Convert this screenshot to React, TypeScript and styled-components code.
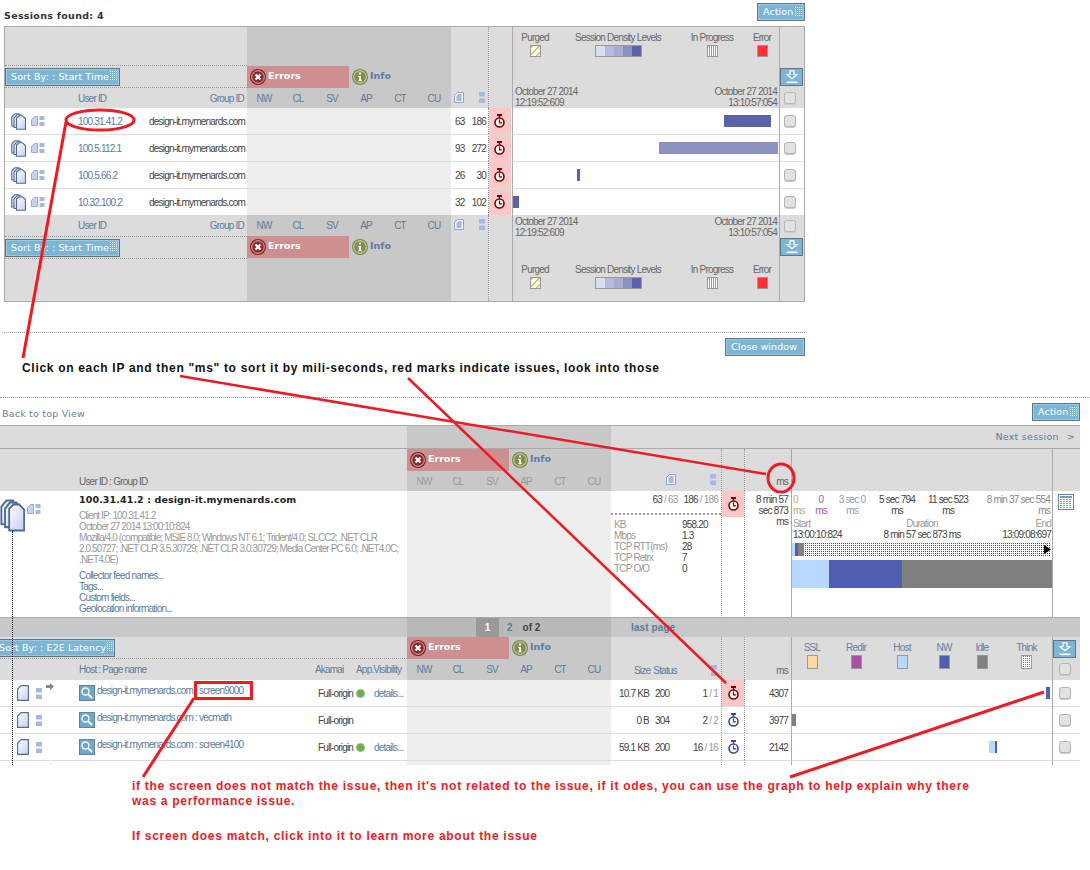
import React from "react";
import styled, { createGlobalStyle, css } from "styled-components";

const GlobalStyle = createGlobalStyle`
  html, body {
    margin: 0;
    padding: 0;
    background: #fff;
  }
  body {
    font: 10px/11px "Liberation Sans", Arial, sans-serif;
    letter-spacing: -0.8px;
    color: #444;
  }
  * {
    box-sizing: border-box;
  }
`;

const LINK = "#5b7c9e";
const LINE = "#aaa";
const HEAD = "#dcdcdc";
const ERR_HEAD = "#c8c8c8";
const ERR_ROW = "#eee";
const BLUE = "#525fb0";
const VERDANA = `"DejaVu Sans", Verdana, sans-serif`;

const Page = styled.div`
  position: relative;
  width: 1090px;
  height: 870px;
  overflow: hidden;
`;

const TopBar = styled.div`
  display: flex;
  justify-content: space-between;
  align-items: flex-start;
  width: 805px;
  height: 26px;
  padding-left: 4px;
`;

const Title = styled.div`
  margin-top: 10px;
  font: bold 9.5px/11px ${VERDANA};
  letter-spacing: 0.3px;
  color: #333;
`;

const BlueButton = styled.div<{ $w: number }>`
  display: flex;
  align-items: center;
  justify-content: space-between;
  width: ${(p) => p.$w}px;
  height: 18px;
  padding: 0 2px 0 5px;
  flex: none;
  background: #7db6d4;
  border: 1px solid #5f7785;
  box-shadow: inset 0 0 0 1px #9cc9e0;
  font: 9.5px/12px ${VERDANA};
  letter-spacing: 0.1px;
  color: #fff;
  white-space: nowrap;
`;

const ActionButton = styled(BlueButton)`
  margin-top: 3px;
`;

const Grip = styled.span`
  width: 8px;
  height: 9px;
  margin-bottom: 2px;
  flex: none;
  background: conic-gradient(#e4f3fb 25%, transparent 0) 0 0 / 2px 2px;
`;

const SessionPanel = styled.div`
  display: grid;
  grid-template-columns: 242px 204px 37px 24px 267px 25px;
  grid-template-rows: 81px 26px 27px 27px 27px 1fr;
  width: 801px;
  height: 276px;
  margin-left: 4px;
  border: 1px solid ${LINE};
  background: ${HEAD};
`;

const DetailPanel = styled.div`
  position: relative;
  display: grid;
  grid-template-columns: 407px 204px 110px 23px 47px 261px 28px;
  grid-auto-rows: min-content;
  width: 1080px;
  height: 340px;
  overflow: hidden;
  border-top: 1px solid ${LINE};
`;

const Stack = styled.div`
  display: flex;
  flex-direction: column;
`;

const HeadColumn = styled(Stack)`
  background: ${HEAD};
`;

const ErrorColumn = styled(Stack)`
  background: ${ERR_HEAD};
`;

const Gap = styled.div<{ $h: number }>`
  height: ${(p) => p.$h}px;
  border-bottom: 1px dotted #999;
`;

const PlainGap = styled.div<{ $h: number }>`
  height: ${(p) => p.$h}px;
`;

const SortBand = styled.div<{ $ml?: number; $line?: boolean }>`
  display: flex;
  align-items: center;
  height: 22px;
  margin-left: ${(p) => p.$ml || 0}px;
  ${(p) => p.$line && "border-bottom: 1px dotted #999;"}
`;

const LabelRow = styled.div<{ $h: number; $line?: boolean }>`
  display: flex;
  align-items: center;
  justify-content: space-between;
  height: ${(p) => p.$h}px;
  padding: 0 3px 0 73px;
  color: ${LINK};
  ${(p) => p.$line && "border-bottom: 1px dotted #999;"}
`;

const Band = styled.div`
  display: flex;
  align-items: stretch;
  height: 22px;
`;

const ErrorsTag = styled.div`
  display: flex;
  align-items: center;
  gap: 2px;
  width: 102px;
  padding: 0 0 2px 3px;
  background: #cd8f8f;
  font: bold 9.5px/12px ${VERDANA};
  letter-spacing: 0;
  color: #fff;

  svg {
    margin-top: 2px;
  }
`;

const InfoTag = styled(ErrorsTag)`
  width: auto;
  background: none;
  color: ${LINK};
`;

const CodeRow = styled.div<{ $h: number; $muted?: boolean }>`
  display: grid;
  grid-template-columns: repeat(6, 34px);
  align-items: center;
  height: ${(p) => p.$h}px;
  text-align: center;
  color: ${(p) => (p.$muted ? "#999" : LINK)};
`;

const rowCell = css<{ $first?: boolean }>`
  height: ${(p) => (p.$first ? 26 : 27)}px;
  ${(p) => !p.$first && "border-top: 1px solid #ddd;"}
`;

const NameCell = styled.div<{ $first?: boolean }>`
  ${rowCell}
  display: grid;
  grid-template-columns: 20px 47px 71px 1fr;
  align-items: center;
  padding-left: 6px;
  background: #fff;
`;

const Ip = styled.span`
  color: ${LINK};
`;

const Group = styled.span`
  color: #444;
  white-space: nowrap;
`;

const ErrorCell = styled.div<{ $first?: boolean }>`
  ${rowCell}
  background: ${ERR_ROW};
`;

const CountCell = styled.div<{ $first?: boolean }>`
  ${rowCell}
  display: flex;
  align-items: center;
  justify-content: space-between;
  padding: 0 2px 0 4px;
  background: #fff;
`;

const TimerCell = styled.div<{ $first?: boolean; $alert?: boolean }>`
  ${rowCell}
  display: flex;
  align-items: center;
  justify-content: center;
  padding-right: 3px;
  border-left: 1px dotted #999;
  background: ${(p) => (p.$alert ? "linear-gradient(90deg, #ffc8c8 22px, #fff 0)" : "#fff")};
`;

const GraphCell = styled.div<{ $first?: boolean }>`
  ${rowCell}
  display: flex;
  align-items: center;
  border-left: 1px solid ${LINE};
  background: #fff;
`;

const CheckCell = styled.div<{ $first?: boolean; $pad?: number }>`
  ${rowCell}
  display: flex;
  align-items: center;
  padding-left: ${(p) => p.$pad || 4}px;
  border-left: 1px solid ${LINE};
  background: #fff;
`;

const Bar = styled.div<{ $left?: number; $w: number; $color: string }>`
  width: ${(p) => p.$w}px;
  height: 12px;
  margin-left: ${(p) => p.$left || 0}px;
  background: ${(p) => p.$color};
`;

const Checkbox = styled.span`
  display: block;
  width: 12px;
  height: 12px;
  background: #e2e2e2;
  border: 1px solid #b4b4b4;
  border-radius: 3px;
  box-shadow: 0 1px 0 #ccc;
`;

const CountHead = styled.div<{ $bottom?: number; $top?: number; $left?: number; $right?: number }>`
  display: flex;
  align-items: ${(p) => (p.$top ? "flex-start" : "flex-end")};
  justify-content: space-between;
  padding: ${(p) => p.$top || 0}px ${(p) => p.$right || 3}px ${(p) => p.$bottom || 0}px ${(p) => p.$left || 3}px;
  background: ${HEAD};
`;

const GraphHead = styled.div<{ $footer?: boolean }>`
  display: flex;
  flex-direction: column;
  ${(p) => p.$footer && "padding: 1px 0 12px;"}
  border-left: 1px solid ${LINE};
  background: ${HEAD};
`;

const Legend = styled.div<{ $end?: boolean }>`
  display: grid;
  grid-template-columns: 44px 122px 66px 34px;
  padding-top: 5px;
  ${(p) => p.$end && "margin-top: auto;"}
  text-align: center;
  color: #666;
`;

const LegendItem = styled.div`
  display: flex;
  flex-direction: column;
  align-items: center;
  gap: 2px;
  white-space: nowrap;
`;

const swatchFill = {
  purged: "repeating-linear-gradient(-45deg, #fff 0 2px, #f5b642 2px 3px, #fff 3px 5px)",
  progress: "repeating-linear-gradient(90deg, #fff 0 1px, #999 1px 2px)",
  error: "#ff3030",
  ssl: "#ffd9a0",
  redir: "#a850a0",
  host: "#b8d8ff",
  nw: BLUE,
  idle: "#808080",
  think: "conic-gradient(#777 25%, #fff 0) 0 0 / 2px 2px",
};

const Swatch = styled.span<{ $kind: keyof typeof swatchFill; $h?: number }>`
  display: block;
  width: 11px;
  height: ${(p) => p.$h || 12}px;
  background: ${(p) => swatchFill[p.$kind]};
  border: 1px solid #999;
`;

const Density = styled.span`
  display: grid;
  grid-template-columns: repeat(5, 1fr);
  width: 47px;
  height: 12px;
  border: 1px solid #999;
`;

const DensityStep = styled.span<{ $color: string }>`
  background: ${(p) => p.$color};
`;

const Dates = styled.div<{ $end?: boolean }>`
  display: flex;
  justify-content: space-between;
  padding: 0 2px;
  ${(p) => p.$end && "margin-top: auto;"}
  color: #666;
`;

const DateRight = styled.div`
  text-align: right;
`;

const CheckHead = styled.div<{ $top?: number }>`
  display: flex;
  flex-direction: column;
  padding-top: ${(p) => p.$top || 0}px;
  border-left: 1px solid ${LINE};
  background: ${HEAD};
`;

const DownButton = styled.div<{ $mt?: number }>`
  display: flex;
  align-items: center;
  justify-content: center;
  width: 23px;
  height: 18px;
  margin-top: ${(p) => p.$mt || 0}px;
  background: #7db6d4;
  border: 1px solid #5f7785;
`;

const CheckSlot = styled.div<{ $mt?: number; $pad?: number }>`
  margin-top: ${(p) => p.$mt || 0}px;
  padding-left: ${(p) => p.$pad || 4}px;
`;

const Divider = styled.div<{ $w: string; $mt: number; $ml?: number }>`
  width: ${(p) => p.$w};
  margin: ${(p) => p.$mt}px 0 0 ${(p) => p.$ml || 0}px;
  border-top: 1px dotted #999;
`;

const CloseRow = styled.div`
  display: flex;
  justify-content: flex-end;
  width: 805px;
  margin-top: 5px;
`;

const Instruction = styled.div`
  margin: 5px 0 0 22px;
  font: bold 12px/14px "Liberation Sans", Arial, sans-serif;
  letter-spacing: 0.69px;
  color: #111;
`;

const BackRow = styled.div`
  display: flex;
  justify-content: space-between;
  align-items: flex-start;
  width: 1080px;
  height: 27px;
  padding-top: 5px;
`;

const BackLink = styled.a`
  margin: 5px 0 0 2px;
  font: 9.5px/12px ${VERDANA};
  letter-spacing: 0.2px;
  color: #6a7f9e;
`;

const TopBand = styled.div<{ $dark?: boolean; $span?: number }>`
  display: flex;
  align-items: center;
  justify-content: flex-end;
  gap: 8px;
  height: 23px;
  padding-right: 5px;
  ${(p) => p.$span && `grid-column: span ${p.$span};`}
  background: ${(p) => (p.$dark ? ERR_HEAD : HEAD)};
  border-bottom: 1px solid ${LINE};
  font: 9.5px/12px ${VERDANA};
  letter-spacing: 0.25px;
  color: ${LINK};
`;

const DetailLabel = styled.div`
  display: flex;
  align-items: flex-end;
  height: 42px;
  padding: 0 0 4px 79px;
  background: ${HEAD};
  color: #666;
`;

const DottedHead = styled.div<{ $right?: boolean }>`
  display: flex;
  align-items: flex-end;
  justify-content: ${(p) => (p.$right ? "flex-end" : "flex-start")};
  padding: 0 3px 4px 0;
  border-left: 1px dotted #999;
  background: ${HEAD};
  color: #666;
`;

const SizeHead = styled.div`
  display: flex;
  align-items: flex-end;
  justify-content: space-between;
  padding: 0 4px 4px 23px;
  background: ${HEAD};
`;

const SolidHead = styled.div`
  border-left: 1px solid ${LINE};
  background: ${HEAD};
`;

const SessionInfo = styled.div`
  display: grid;
  grid-template-columns: 79px 1fr;
  height: 127px;
  border-bottom: 1px solid ${LINE};
  background: #fff;
`;

const SessionIcons = styled.div`
  display: flex;
  align-items: flex-start;
  gap: 2px;
  padding-top: 8px;
`;

const SmallPairSlot = styled.div`
  margin-top: 5px;
`;

const SessionText = styled.div`
  padding-top: 3px;
  white-space: nowrap;
`;

const SessionName = styled.div`
  margin-bottom: 4px;
  font: bold 9.5px/12px ${VERDANA};
  letter-spacing: 0.1px;
  color: #222;
`;

const AgentText = styled.div`
  letter-spacing: -0.9px;
  color: #999;
`;

const DetailLinks = styled.div`
  margin-top: 5px;
  color: ${LINK};
`;

const PlainColumn = styled.div<{ $bg?: string }>`
  height: 127px;
  border-bottom: 1px solid ${LINE};
  background: ${(p) => p.$bg || "#fff"};
`;

const SizeColumn = styled(PlainColumn)`
  padding-top: 3px;
`;

const Totals = styled.div`
  display: flex;
  justify-content: flex-end;
  gap: 6px;
  height: 21px;
  padding-right: 3px;
  border-bottom: 2px dotted #999;
  color: #444;
`;

const Faint = styled.span`
  color: #999;
`;

const Metrics = styled.div`
  display: grid;
  grid-template-columns: 68px 1fr;
  padding: 4px 0 0 3px;
`;

const MetricName = styled.span`
  color: #999;
`;

const DottedColumn = styled(PlainColumn)`
  border-left: 1px dotted #999;
`;

const PinkBlock = styled.div`
  display: flex;
  align-items: center;
  justify-content: center;
  height: 26px;
  background: #ffc8c8;
`;

const DurationText = styled(DottedColumn)`
  padding: 3px 3px 0 0;
  text-align: right;
`;

const SolidColumn = styled(PlainColumn)`
  border-left: 1px solid ${LINE};
`;

const GraphDetail = styled(SolidColumn)`
  padding-top: 3px;
`;

const PhaseRow = styled.div`
  display: grid;
  grid-template-columns: 19px 18px 44px 46px 56px 74px;
  padding-left: 1px;
  height: 24px;
  text-align: center;
`;

const Phase = styled.div<{ $color: string; $align?: string }>`
  color: ${(p) => p.$color};
  text-align: ${(p) => p.$align || "center"};
`;

const SpanLabels = styled.div`
  display: grid;
  grid-template-columns: 1fr auto 1fr;
  padding: 0 1px;
  height: 25px;
`;

const SpanColumn = styled.div<{ $align?: string }>`
  color: #444;
  text-align: ${(p) => p.$align || "left"};
`;

const SpanTitle = styled.div`
  color: #999;
`;

const Track = styled.div`
  display: flex;
  align-items: center;
  height: 13px;
  padding-right: 1px;
`;

const TrackBar = styled.span<{ $w: number; $color: string }>`
  width: ${(p) => p.$w}px;
  height: 13px;
  flex: none;
  background: ${(p) => p.$color};
`;

const TrackDots = styled.div`
  display: flex;
  justify-content: flex-end;
  align-items: center;
  flex: 1;
  height: 13px;
  background: conic-gradient(#555 25%, transparent 0) 0 0 / 2px 2px;
`;

const Waterfall = styled.div`
  display: flex;
  height: 28px;
  margin-top: 4px;
`;

const WaterfallPart = styled.span<{ $w: number; $color: string }>`
  width: ${(p) => p.$w}px;
  background: ${(p) => p.$color};
`;

const CalendarSlot = styled(SolidColumn)`
  padding: 3px 0 0 5px;
`;

const Pager = styled.div<{ $bg: string; $pad?: number; $span?: number }>`
  display: flex;
  align-items: center;
  height: 19px;
  padding-left: ${(p) => p.$pad || 0}px;
  ${(p) => p.$span && `grid-column: span ${p.$span};`}
  background: ${(p) => p.$bg};
  font: bold 10px/12px "Liberation Sans", Arial, sans-serif;
  letter-spacing: 0;
  color: #444;
`;

const PageBox = styled.span`
  display: flex;
  align-items: center;
  justify-content: center;
  width: 23px;
  height: 19px;
  background: #999;
  color: #fff;
`;

const PageLink = styled.span`
  margin-left: 8px;
  color: ${LINK};
`;

const PageOf = styled.span`
  margin-left: 10px;
`;

const LastPage = styled.span`
  letter-spacing: 0.1px;
  color: ${LINK};
`;

const ListHeadLabels = styled.div`
  display: grid;
  grid-template-columns: 79px 236px 41px 1fr;
  align-items: center;
  height: 21px;
  color: ${LINK};
`;

const ListSize = styled.div`
  display: flex;
  gap: 3px;
  color: ${LINK};
`;

const ListLegend = styled.div`
  display: grid;
  grid-template-columns: 40px 48px 44px 40px 36px 53px;
  height: 43px;
  padding-top: 5px;
  text-align: center;
  color: #667f9f;
`;

const ListName = styled.div<{ $first?: boolean }>`
  ${rowCell}
  display: grid;
  grid-template-columns: 19px 10px 33px 18px 221px 38px 18px 33px;
  align-items: center;
  padding-left: 17px;
  background: #fff;
`;

const ArrowSlot = styled.div`
  align-self: flex-start;
  margin-top: 3px;
`;

const PageName = styled.span`
  align-self: flex-start;
  margin-top: 5px;
  color: ${LINK};
  white-space: pre;
`;

const Origin = styled.span`
  color: #444;
  white-space: nowrap;
`;

const Dot = styled.span`
  display: block;
  width: 9px;
  height: 9px;
  border: 1px solid #8fb886;
  border-radius: 50%;
  background: #6cb04e;
`;

const Magnifier = styled.span`
  display: flex;
  align-items: center;
  justify-content: center;
  width: 16px;
  height: 16px;
  background: #6fa8cc;
  border: 1px solid #6b7f8c;
`;

const ListCount = styled.div<{ $first?: boolean }>`
  ${rowCell}
  display: grid;
  grid-template-columns: 38px 6px 20px 1fr;
  align-items: center;
  padding-right: 3px;
  background: #fff;
  white-space: nowrap;
`;

const SizeValue = styled.span`
  grid-column: 1;
  text-align: right;
`;

const StatusValue = styled.span`
  grid-column: 3;
`;

const PagesValue = styled.span`
  grid-column: 4;
  text-align: right;
`;

const ListTimer = styled.div<{ $first?: boolean; $alert?: boolean }>`
  ${rowCell}
  display: flex;
  align-items: center;
  justify-content: center;
  border-left: 1px dotted #999;
  background: ${(p) => (p.$alert ? "#ffc8c8" : "#fff")};
`;

const ListMs = styled.div<{ $first?: boolean }>`
  ${rowCell}
  display: flex;
  align-items: center;
  justify-content: flex-end;
  padding-right: 3px;
  border-left: 1px dotted #999;
  background: #fff;
`;

const TreeLine = styled.div`
  position: absolute;
  left: 12px;
  top: 105px;
  bottom: 0;
  border-left: 1px dotted #000;
`;

const Notes = styled.div`
  padding: 14px 0 0 132px;
  font: bold 12px/15px "Liberation Sans", Arial, sans-serif;
  letter-spacing: 0.71px;
  color: #ed1c24;
`;

const NoteGap = styled.div`
  height: 20px;
`;

const Annotations = styled.svg`
  position: absolute;
  top: 0;
  left: 0;
  pointer-events: none;
`;

/* drawn icons */

const StackIcon = ({ w = 15, h = 17 }: { w?: number; h?: number }) => (
  <svg width={w} height={h} viewBox="0 0 15 17" preserveAspectRatio="none" style={{ display: "block" }}>
    <defs>
      <linearGradient id="page" x1="0" y1="0" x2="1" y2="1">
        <stop offset="0" stopColor="#fff" />
        <stop offset="1" stopColor="#c4cff0" />
      </linearGradient>
    </defs>
    <g stroke="#4f6a9c" strokeWidth="1.100" strokeLinejoin="round" fill="url(#page)">
      <path d="M.8 4 3.800.8H8V13H.8Z" />
      <path d="M3 5 6 1.800h4V14.500H3Z" />
      <path d="M5.500 5 8 2.800h3.500l3 2.700v10.700h-9Z" />
    </g>
  </svg>
);

const SmallPair = () => (
  <svg width="14" height="10" viewBox="0 0 14 10" style={{ display: "block" }}>
    <path d="M.5 3.500 3.500.5h3v9h-6Z" fill="#c7d2ee" stroke="#98a9d6" />
    <rect x="8.500" y="0" width="5" height="4" fill="#a8b8e0" />
    <rect x="8.500" y="6" width="5" height="4" fill="#a8b8e0" />
  </svg>
);

const PageIcon = () => (
  <svg width="10" height="11" viewBox="0 0 10 11" style={{ display: "block" }}>
    <path d="M.5 3.500 3.500.5h6v10h-9Z" fill="#f4f6fd" stroke="#8fa4d0" />
    <path d="M2.500 4 4.500 2h3v7h-5Z" fill="#a8b8e0" />
  </svg>
);

const ListDoc = () => (
  <svg width="12" height="16" viewBox="0 0 12 16" style={{ display: "block" }}>
    <path d="M.6 4 4 .6h7.400v14.800H.6Z" fill="url(#page)" stroke="#4f6a9c" strokeWidth="1.100" strokeLinejoin="round" />
  </svg>
);

const TwoSquares = () => (
  <svg width="6" height="11" viewBox="0 0 6 11" style={{ display: "block" }}>
    <rect width="6" height="4.500" fill="#a8b8e0" />
    <rect y="6.500" width="6" height="4.500" fill="#a8b8e0" />
  </svg>
);

const Stopwatch = ({ color = "#800000" }: { color?: string }) => (
  <svg width="11" height="14" viewBox="0 0 11 14" style={{ display: "block" }}>
    <path d="M3 1h5" stroke={color} strokeWidth="2" />
    <path d="M5.500 2v2" stroke={color} strokeWidth="1.400" />
    <circle cx="5.500" cy="8.500" r="4.500" fill="#fff" stroke={color} strokeWidth="1.600" />
    <path d="M5.500 5.500v3.300h2.600" fill="none" stroke={color} strokeWidth="1.200" />
  </svg>
);

const ErrorIcon = () => (
  <svg width="16" height="16" viewBox="0 0 16 16" style={{ display: "block" }}>
    <circle cx="8" cy="8" r="8" fill="#7f2020" />
    <circle cx="8" cy="8" r="6.300" fill="#8d2b2b" stroke="#f0dada" strokeWidth="0.800" />
    <path d="M5.500 5.500l5 5M10.500 5.500l-5 5" stroke="#fff" strokeWidth="2.200" />
  </svg>
);

const InfoIcon = () => (
  <svg width="16" height="16" viewBox="0 0 16 16" style={{ display: "block" }}>
    <circle cx="8" cy="8" r="8" fill="#79874a" />
    <circle cx="8" cy="8" r="6.300" fill="#808e50" stroke="#e6ecc8" strokeWidth="0.800" />
    <rect x="7" y="3.500" width="2" height="2" fill="#fff" />
    <path d="M6.200 7h2.800v4.200h1v1H6.200v-1h1V8h-1Z" fill="#fff" />
  </svg>
);

const DownArrow = () => (
  <svg width="14" height="14" viewBox="0 0 14 14" style={{ display: "block" }}>
    <path d="M5 .8h4v3.700h3L7 8.800 2 4.500h3Z" fill="none" stroke="#fff" strokeWidth="1.200" />
    <path d="M1.500 12.300h11" stroke="#fff" strokeWidth="1.600" />
  </svg>
);

const Lens = () => (
  <svg width="12" height="12" viewBox="0 0 12 12" style={{ display: "block" }}>
    <circle cx="4.500" cy="4.500" r="3.500" fill="none" stroke="#fff" strokeWidth="1.300" />
    <path d="M7 7l4 4" stroke="#fff" strokeWidth="1.800" />
  </svg>
);

const RightArrow = () => (
  <svg width="8" height="7" viewBox="0 0 8 7" style={{ display: "block" }}>
    <path d="M0 2h4V0l4 3.500L4 7V5H0Z" fill="#888" />
  </svg>
);

const Calendar = () => (
  <svg width="16" height="16" viewBox="0 0 16 16" style={{ display: "block" }}>
    <rect x=".5" y=".5" width="15" height="15" fill="#fff" stroke="#5a86b8" />
    <rect x="2" y="2" width="12" height="2" fill="#6f9cc8" />
    <path d="M2 5.500h12M2 7.500h12M2 9.500h12M2 11.500h12M2 13.500h12" stroke="#6f9cc8" strokeDasharray="2 1" />
  </svg>
);

const TrackArrow = () => (
  <svg width="7" height="9" viewBox="0 0 7 9" style={{ display: "block" }}>
    <path d="M0 0l7 4.500L0 9Z" fill="#000" />
  </svg>
);

/* repeated parts */

const SortButton = ({ label, w = 115 }: { label: string; w?: number }) => (
  <BlueButton $w={w}>
    {label}
    <Grip />
  </BlueButton>
);

const ErrorBand = () => (
  <Band>
    <ErrorsTag>
      <ErrorIcon />
      Errors
    </ErrorsTag>
    <InfoTag>
      <InfoIcon />
      Info
    </InfoTag>
  </Band>
);

const Codes = ({ h, muted }: { h: number; muted?: boolean }) => (
  <CodeRow $h={h} $muted={muted}>
    {["NW", "CL", "SV", "AP", "CT", "CU"].map((c) => (
      <span key={c}>{c}</span>
    ))}
  </CodeRow>
);

const LegendBar = ({ end }: { end?: boolean }) => (
  <Legend $end={end}>
    <LegendItem>
      Purged
      <Swatch $kind="purged" />
    </LegendItem>
    <LegendItem>
      Session Density Levels
      <Density>
        {["#dcdff0", "#b8bcdc", "#a8acd4", "#8a90c0", "#5a62ab"].map((c) => (
          <DensityStep key={c} $color={c} />
        ))}
      </Density>
    </LegendItem>
    <LegendItem>
      In Progress
      <Swatch $kind="progress" />
    </LegendItem>
    <LegendItem>
      Error
      <Swatch $kind="error" />
    </LegendItem>
  </Legend>
);

const DateRange = ({ end }: { end?: boolean }) => (
  <Dates $end={end}>
    <div>
      October 27 2014
      <br />
      12:19:52:609
    </div>
    <DateRight>
      October 27 2014
      <br />
      13:10:57:054
    </DateRight>
  </Dates>
);

const sessions = [
  { ip: "100.31.41.2", pages: 63, objects: 186, left: 211, w: 47, color: "#5a62ab" },
  { ip: "100.5.112.1", pages: 93, objects: 272, left: 146, w: 119, color: "#8a90c0" },
  { ip: "100.5.66.2", pages: 26, objects: 30, left: 64, w: 3, color: "#5a62ab" },
  { ip: "10.32.100.2", pages: 32, objects: 102, left: 0, w: 6, color: "#5a62ab" },
];

const pages = [
  { name: "design-it.mymenards.com : screen9000", akamai: true, size: "10.7 KB", status: 200, count: 1, ms: 4307, alert: true },
  { name: "design-it.mymenards.com : vecmath", akamai: false, size: "0 B", status: 304, count: 2, ms: 3977 },
  { name: "design-it.mymenards.com : screen4100", akamai: true, size: "59.1 KB", status: 200, count: 16, ms: 2142 },
];

const metrics = [
  ["KB", "958.20"],
  ["Mbps", "1.3"],
  ["TCP RTT(ms)", "28"],
  ["TCP Retrx", "7"],
  ["TCP O/O", "0"],
];

const links = ["Collector feed names...", "Tags...", "Custom fields...", "Geolocation information..."];

const App = () => (
  <Page>
    <GlobalStyle />

    <TopBar>
      <Title>Sessions found: 4</Title>
      <ActionButton $w={48}>
        Action
        <Grip />
      </ActionButton>
    </TopBar>

    <SessionPanel>
      <HeadColumn>
        <Gap $h={39} />
        <SortBand $line>
          <SortButton label="Sort By: : Start Time" />
        </SortBand>
        <LabelRow $h={20}>
          <span>User ID</span>
          <span>Group ID</span>
        </LabelRow>
      </HeadColumn>
      <ErrorColumn>
        <PlainGap $h={39} />
        <ErrorBand />
        <Codes h={20} />
      </ErrorColumn>
      <CountHead $bottom={5}>
        <PageIcon />
        <TwoSquares />
      </CountHead>
      <DottedHead />
      <GraphHead>
        <LegendBar />
        <DateRange end />
      </GraphHead>
      <CheckHead $top={41}>
        <DownButton>
          <DownArrow />
        </DownButton>
        <CheckSlot $mt={6}>
          <Checkbox />
        </CheckSlot>
      </CheckHead>

      {sessions.map((s, i) => (
        <React.Fragment key={s.ip}>
          <NameCell $first={i === 0}>
            <StackIcon />
            <SmallPair />
            <Ip>{s.ip}</Ip>
            <Group>design-it.mymenards.com</Group>
          </NameCell>
          <ErrorCell $first={i === 0} />
          <CountCell $first={i === 0}>
            <span>{s.pages}</span>
            <span>{s.objects}</span>
          </CountCell>
          <TimerCell $first={i === 0} $alert>
            <Stopwatch />
          </TimerCell>
          <GraphCell $first={i === 0}>
            <Bar $left={s.left} $w={s.w} $color={s.color} />
          </GraphCell>
          <CheckCell $first={i === 0}>
            <Checkbox />
          </CheckCell>
        </React.Fragment>
      ))}

      <HeadColumn>
        <LabelRow $h={22} $line>
          <span>User ID</span>
          <span>Group ID</span>
        </LabelRow>
        <SortBand $line>
          <SortButton label="Sort By: : Start Time" />
        </SortBand>
      </HeadColumn>
      <ErrorColumn>
        <Codes h={21} />
        <ErrorBand />
      </ErrorColumn>
      <CountHead $top={4}>
        <PageIcon />
        <TwoSquares />
      </CountHead>
      <DottedHead />
      <GraphHead $footer>
        <DateRange />
        <LegendBar end />
      </GraphHead>
      <CheckHead $top={5}>
        <CheckSlot>
          <Checkbox />
        </CheckSlot>
        <DownButton $mt={6}>
          <DownArrow />
        </DownButton>
      </CheckHead>
    </SessionPanel>

    <Divider $w="801px" $mt={30} $ml={4} />
    <CloseRow>
      <BlueButton $w={80}>Close window</BlueButton>
    </CloseRow>
    <Instruction>
      Click on each IP and then "ms" to sort it by mili-seconds, red marks indicate issues, look into those
    </Instruction>
    <Divider $w="1090px" $mt={22} />

    <BackRow>
      <BackLink>Back to top View</BackLink>
      <BlueButton $w={48}>
        Action
        <Grip />
      </BlueButton>
    </BackRow>

    <DetailPanel>
      <TopBand />
      <TopBand $dark />
      <TopBand $span={5}>
        <span>Next session</span>
        <span>&gt;</span>
      </TopBand>

      <DetailLabel>User ID : Group ID</DetailLabel>
      <ErrorColumn>
        <ErrorBand />
        <Codes h={20} muted />
      </ErrorColumn>
      <CountHead $bottom={6} $left={55} $right={5}>
        <PageIcon />
        <TwoSquares />
      </CountHead>
      <DottedHead />
      <DottedHead $right>ms</DottedHead>
      <SolidHead />
      <SolidHead />

      <SessionInfo>
        <SessionIcons>
          <StackIcon w={25} h={33} />
          <SmallPairSlot>
            <SmallPair />
          </SmallPairSlot>
        </SessionIcons>
        <SessionText>
          <SessionName>100.31.41.2 : design-it.mymenards.com</SessionName>
          <AgentText>
            Client IP: 100.31.41.2
            <br />
            October 27 2014 13:00:10:824
            <br />
            Mozilla/4.0 (compatible; MSIE 8.0; Windows NT 6.1; Trident/4.0; SLCC2; .NET CLR
            <br />
            2.0.50727; .NET CLR 3.5.30729; .NET CLR 3.0.30729; Media Center PC 6.0; .NET4.0C;
            <br />
            .NET4.0E)
          </AgentText>
          <DetailLinks>
            {links.map((l) => (
              <div key={l}>{l}</div>
            ))}
          </DetailLinks>
        </SessionText>
      </SessionInfo>
      <PlainColumn $bg={ERR_ROW} />
      <SizeColumn>
        <Totals>
          <span>
            63 <Faint>/ 63</Faint>
          </span>
          <span>
            186 <Faint>/ 186</Faint>
          </span>
        </Totals>
        <Metrics>
          {metrics.map(([k, v]) => (
            <React.Fragment key={k}>
              <MetricName>{k}</MetricName>
              <span>{v}</span>
            </React.Fragment>
          ))}
        </Metrics>
      </SizeColumn>
      <DottedColumn>
        <PinkBlock>
          <Stopwatch />
        </PinkBlock>
      </DottedColumn>
      <DurationText>
        8 min 57
        <br />
        sec 873
        <br />
        ms
      </DurationText>
      <GraphDetail>
        <PhaseRow>
          <Phase $color="#c8a868" $align="left">
            0<br />
            ms
          </Phase>
          <Phase $color="#a858a8">
            0<br />
            ms
          </Phase>
          <Phase $color="#8a9ac8">
            3 sec 0<br />
            ms
          </Phase>
          <Phase $color="#444">
            5 sec 794
            <br />
            ms
          </Phase>
          <Phase $color="#444">
            11 sec 523
            <br />
            ms
          </Phase>
          <Phase $color="#888" $align="right">
            8 min 37 sec 554
            <br />
            ms
          </Phase>
        </PhaseRow>
        <SpanLabels>
          <SpanColumn>
            <SpanTitle>Start</SpanTitle>
            13:00:10:824
          </SpanColumn>
          <SpanColumn $align="center">
            <SpanTitle>Duration</SpanTitle>8 min 57 sec 873 ms
          </SpanColumn>
          <SpanColumn $align="right">
            <SpanTitle>End</SpanTitle>
            13:09:08:697
          </SpanColumn>
        </SpanLabels>
        <Track>
          <TrackBar $w={3} $color="#b8d8ff" />
          <TrackBar $w={3} $color={BLUE} />
          <TrackBar $w={6} $color="#808080" />
          <TrackDots>
            <TrackArrow />
          </TrackDots>
        </Track>
        <Waterfall>
          <WaterfallPart $w={37} $color="#b8d8ff" />
          <WaterfallPart $w={73} $color={BLUE} />
          <WaterfallPart $w={150} $color="#808080" />
        </Waterfall>
      </GraphDetail>
      <CalendarSlot>
        <Calendar />
      </CalendarSlot>

      <Pager $bg={ERR_HEAD} />
      <Pager $bg="#b8b8b8" $pad={69}>
        <PageBox>1</PageBox>
        <PageLink>2</PageLink>
        <PageOf>of 2</PageOf>
      </Pager>
      <Pager $bg={ERR_HEAD} $pad={20} $span={5}>
        <LastPage>last page</LastPage>
      </Pager>

      <HeadColumn>
        <SortBand $line $ml={-7}>
          <SortButton label="Sort By: : E2E Latency" w={122} />
        </SortBand>
        <ListHeadLabels>
          <span />
          <span>Host : Page name</span>
          <span>Akamai</span>
          <span>App.Visibility</span>
        </ListHeadLabels>
      </HeadColumn>
      <ErrorColumn>
        <ErrorBand />
        <Codes h={21} />
      </ErrorColumn>
      <SizeHead>
        <ListSize>
          <span>Size</span>
          <span>Status</span>
        </ListSize>
        <TwoSquares />
      </SizeHead>
      <DottedHead />
      <DottedHead $right>ms</DottedHead>
      <GraphHead>
        <ListLegend>
          {(["ssl", "redir", "host", "nw", "idle", "think"] as const).map((kind, i) => (
            <LegendItem key={kind}>
              {["SSL", "Redir", "Host", "NW", "Idle", "Think"][i]}
              <Swatch $kind={kind} $h={14} />
            </LegendItem>
          ))}
        </ListLegend>
      </GraphHead>
      <CheckHead $top={3}>
        <DownButton>
          <DownArrow />
        </DownButton>
        <CheckSlot $mt={5} $pad={6}>
          <Checkbox />
        </CheckSlot>
      </CheckHead>

      {pages.map((p, i) => (
        <React.Fragment key={p.ms}>
          <ListName $first={i === 0}>
            <ListDoc />
            <TwoSquares />
            <ArrowSlot>{i === 0 && <RightArrow />}</ArrowSlot>
            <Magnifier>
              <Lens />
            </Magnifier>
            <PageName>{p.name}</PageName>
            <Origin>Full-origin</Origin>
            {p.akamai ? <Dot /> : <span />}
            {p.akamai ? <Ip>details...</Ip> : <span />}
          </ListName>
          <ErrorCell $first={i === 0} />
          <ListCount $first={i === 0}>
            <SizeValue>{p.size}</SizeValue>
            <StatusValue>{p.status}</StatusValue>
            <PagesValue>
              {p.count} <Faint>/ {p.count}</Faint>
            </PagesValue>
          </ListCount>
          <ListTimer $first={i === 0} $alert={p.alert}>
            <Stopwatch color={p.alert ? "#800000" : "#3a4a9a"} />
          </ListTimer>
          <ListMs $first={i === 0}>{p.ms}</ListMs>
          <GraphCell $first={i === 0}>
            {i === 0 && <Bar $left={254} $w={4} $color={BLUE} />}
            {i === 1 && <Bar $w={4} $color="#808080" />}
            {i === 2 && (
              <>
                <Bar $left={197} $w={6} $color="#b8d8ff" />
                <Bar $w={2} $color={BLUE} />
              </>
            )}
          </GraphCell>
          <CheckCell $first={i === 0} $pad={6}>
            <Checkbox />
          </CheckCell>
        </React.Fragment>
      ))}

      <ListName>
        <ListDoc />
        <TwoSquares />
        <ArrowSlot>
          <RightArrow />
        </ArrowSlot>
      </ListName>
      <ErrorCell />
      <ListCount />
      <ListTimer />
      <ListMs />
      <GraphCell />
      <CheckCell />

      <TreeLine />
    </DetailPanel>

    <Notes>
      if the screen does not match the issue, then it's not related to the issue, if it odes, you can use the graph to
      help explain why there
      <br />
      was a performance issue.
      <NoteGap />
      If screen does match, click into it to learn more about the issue
    </Notes>

    <Annotations width="1090" height="870" viewBox="0 0 1090 870">
      <g fill="none" stroke="#ed1c24" strokeWidth="3">
        <ellipse cx="100" cy="120" rx="34" ry="10" />
        <path d="M66 122 23 358" />
        <path d="M180 376 766 474" strokeWidth="2.500" />
        <ellipse cx="781" cy="478" rx="13" ry="14" />
        <path d="M408 378 726 683" strokeWidth="2.500" />
        <rect x="195.500" y="682.500" width="56" height="16" />
        <path d="M143 777 194 698" />
        <path d="M790 777 1044 692" />
      </g>
    </Annotations>
  </Page>
);

export default App;
